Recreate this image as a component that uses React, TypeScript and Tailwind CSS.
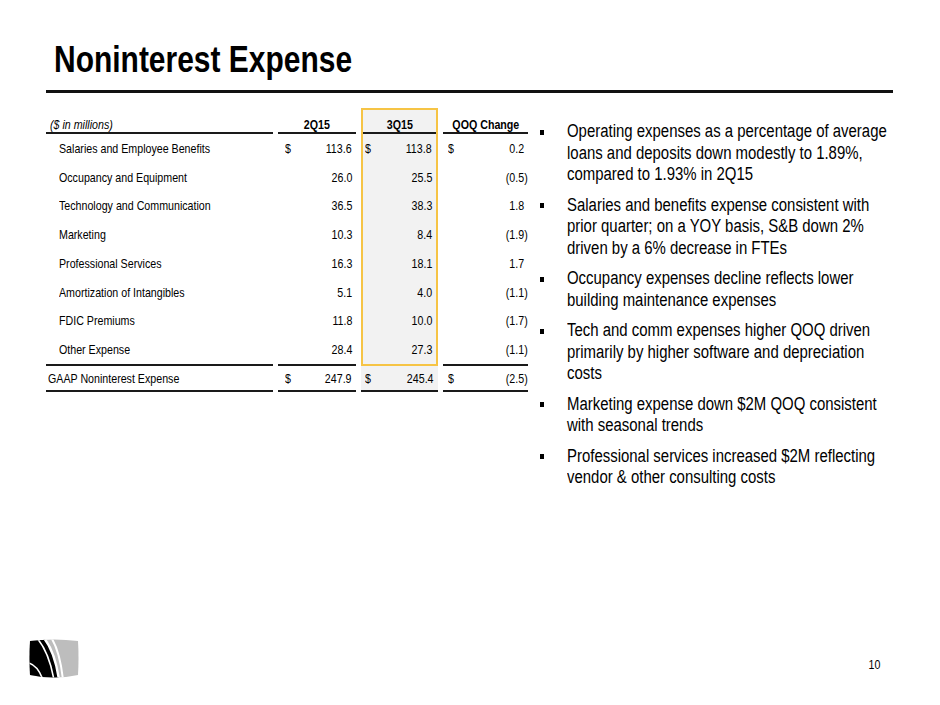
import React from "react";

type Row = { label: string; a: string; b: string; c: string; dollar?: boolean };

const rows: Row[] = [
  { label: "Salaries and Employee Benefits", a: "113.6", b: "113.8", c: "0.2", dollar: true },
  { label: "Occupancy and Equipment", a: "26.0", b: "25.5", c: "(0.5)" },
  { label: "Technology and Communication", a: "36.5", b: "38.3", c: "1.8" },
  { label: "Marketing", a: "10.3", b: "8.4", c: "(1.9)" },
  { label: "Professional Services", a: "16.3", b: "18.1", c: "1.7" },
  { label: "Amortization of Intangibles", a: "5.1", b: "4.0", c: "(1.1)" },
  { label: "FDIC Premiums", a: "11.8", b: "10.0", c: "(1.7)" },
  { label: "Other Expense", a: "28.4", b: "27.3", c: "(1.1)" },
];

const bullets: string[][] = [
  [
    "Operating expenses as a percentage of average",
    "loans and deposits down modestly to 1.89%,",
    "compared to 1.93% in 2Q15",
  ],
  [
    "Salaries and benefits expense consistent with",
    "prior quarter; on a YOY basis, S&B down 2%",
    "driven by a 6% decrease in FTEs",
  ],
  ["Occupancy expenses decline reflects lower", "building maintenance expenses"],
  [
    "Tech and comm expenses higher QOQ driven",
    "primarily by higher software and depreciation",
    "costs",
  ],
  ["Marketing expense down $2M QOQ consistent", "with seasonal trends"],
  ["Professional services increased $2M reflecting", "vendor & other consulting costs"],
];

function L({ children }: { children: React.ReactNode }) {
  return <span className="inline-block whitespace-nowrap scale-x-[0.82] origin-left">{children}</span>;
}
function R({ children }: { children: React.ReactNode }) {
  return <span className="inline-block whitespace-nowrap scale-x-[0.82] origin-right">{children}</span>;
}
function C({ children }: { children: React.ReactNode }) {
  return <span className="inline-block whitespace-nowrap scale-x-[0.82] origin-center">{children}</span>;
}

function Money({ dollar, value, cls }: { dollar?: boolean; value: string; cls: string }) {
  const paren = value.startsWith("(");
  return (
    <div className={`h-[28.75px] flex items-center justify-between ${cls}`}>
      <L>{dollar ? "$" : ""}</L>
      <span className={paren ? "" : "pr-[4px]"}>
        <R>{value}</R>
      </span>
    </div>
  );
}

function Logo() {
  return (
    <svg width="50" height="42" viewBox="0 0 50 42">
      <defs>
        <clipPath id="barrel">
          <path d="M1,3 Q25,0 49,3 Q50,20 49,37 Q25,42 1,37 Q0,20 1,3 Z" />
        </clipPath>
      </defs>
      <g clipPath="url(#barrel)">
        <rect x="0" y="0" width="50" height="42" fill="#bdbdbd" />
        <path d="M0,0 L15,0 Q26,14 30,42 L0,42 Z" fill="#000" />
        <path d="M0,25 Q9,28 14,42" stroke="#fff" strokeWidth="1.6" fill="none" />
        <path d="M8,0 Q20,14 25,42" stroke="#fff" strokeWidth="1.6" fill="none" />
        <path d="M15,0 Q26,14 30,42" stroke="#fff" strokeWidth="2.4" fill="none" />
        <path d="M22.5,0 Q31,14 34,42" stroke="#fff" strokeWidth="2" fill="none" />
      </g>
    </svg>
  );
}

export default function App() {
  const line = "h-[2px] bg-[#1a1a1a]";
  return (
    <div className="w-[940px] h-[705px] bg-white text-black flex flex-col overflow-hidden font-['Liberation_Sans','Arial',sans-serif]">
      <div className="pl-[54px] pt-[41px]">
        <h1 className="inline-block text-[37px] leading-none font-bold scale-x-[0.81] origin-left whitespace-nowrap">
          Noninterest Expense
        </h1>
      </div>
      <div className="ml-[46px] mt-[11px] w-[847px] h-[3px] bg-[#111]" />

      <div className="flex ml-[46px] mt-[15px]">
        {/* Table */}
        <div className="flex gap-[5px] text-[13px] leading-[15px]">
          {/* Label column */}
          <div className="w-[227px] flex flex-col">
            <div className="h-[2px]" />
            <div className="h-[24px] border-b-2 border-[#1a1a1a] flex items-end pl-[4px] italic">
              <L>($ in millions)</L>
            </div>
            {rows.map((r) => (
              <div key={r.label} className="h-[28.75px] flex items-center pl-[13px]">
                <L>{r.label}</L>
              </div>
            ))}
            <div className={line} />
            <div className="h-[26px] border-b-2 border-[#1a1a1a] flex items-center pl-[2px]">
              <L>GAAP Noninterest Expense</L>
            </div>
          </div>

          {/* 2Q15 */}
          <div className="w-[78px] flex flex-col">
            <div className="h-[2px]" />
            <div className="h-[24px] border-b-2 border-[#1a1a1a] flex items-end justify-center font-bold">
              <C>2Q15</C>
            </div>
            {rows.map((r) => (
              <Money key={r.label} dollar={r.dollar} value={r.a} cls="pl-[7px] pr-0" />
            ))}
            <div className={line} />
            <div className="h-[26px] border-b-2 border-[#1a1a1a] flex items-center justify-between pl-[7px] pr-[4px]">
              <L>$</L>
              <R>247.9</R>
            </div>
          </div>

          {/* 3Q15 */}
          <div className="w-[77px] flex flex-col">
            <div className="border-2 border-[#f6c445] bg-[#f2f2f2] flex flex-col">
              <div className="h-[24px] border-b-2 border-[#1a1a1a] flex items-end justify-center font-bold">
                <C>3Q15</C>
              </div>
              {rows.map((r) => (
                <Money key={r.label} dollar={r.dollar} value={r.b} cls="pl-[2px]" />
              ))}
            </div>
            <div className="h-[26px] border-b-2 border-[#1a1a1a] bg-[#f2f2f2] flex items-center justify-between pl-[4px] pr-[4px]">
              <L>$</L>
              <R>245.4</R>
            </div>
          </div>

          {/* QOQ */}
          <div className="w-[85px] flex flex-col">
            <div className="h-[2px]" />
            <div className="h-[24px] border-b-2 border-[#1a1a1a] flex items-end justify-center font-bold">
              <C>QOQ Change</C>
            </div>
            {rows.map((r) => (
              <Money key={r.label} dollar={r.dollar} value={r.c} cls="pl-[5px]" />
            ))}
            <div className={line} />
            <div className="h-[26px] border-b-2 border-[#1a1a1a] flex items-center justify-between pl-[5px]">
              <L>$</L>
              <R>(2.5)</R>
            </div>
          </div>
        </div>

        {/* Bullets */}
        <div className="ml-[12px] mt-[13px] flex flex-col gap-[9px] text-[18px] leading-[21.5px]">
          {bullets.map((b, i) => (
            <div key={i} className="flex">
              <div className="w-[27px] h-[21.5px] flex items-center pt-[1px] shrink-0">
                <div className="w-[4px] h-[5px] bg-black" />
              </div>
              <div className="flex flex-col">
                {b.map((l) => (
                  <div key={l}>
                    <span className="inline-block whitespace-nowrap scale-x-[0.83] origin-left">{l}</span>
                  </div>
                ))}
              </div>
            </div>
          ))}
        </div>
      </div>

      <div className="mt-auto flex items-start justify-between pl-[29px] pr-[60px] pb-[25px]">
        <Logo />
        <div className="mt-[19px] text-[13px] leading-[15px]">
          <R>10</R>
        </div>
      </div>
    </div>
  );
}
